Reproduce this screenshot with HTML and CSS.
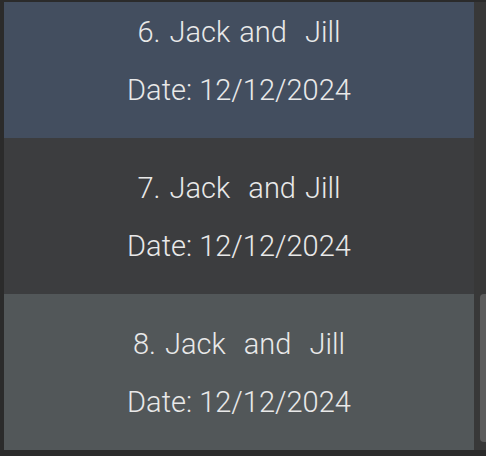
FILE: index.html
```html
<!DOCTYPE html>
<html>
<head>
<meta charset="utf-8">
<link rel="stylesheet" href="styles.css">
</head>
<body>
<div class="frame">
  <div class="viewport">
    <ul class="list">
      <li class="item item-blue"><span class="title">6. Jack and  Jill</span><span class="date">Date: 12/12/2024</span></li>
      <li class="item item-dark"><span class="title">7. Jack  and Jill</span><span class="date">Date: 12/12/2024</span></li>
      <li class="item item-slate"><span class="title">8. Jack  and  Jill</span><span class="date">Date: 12/12/2024</span></li>
    </ul>
  </div>
  <div class="track"><div class="thumb"></div></div>
</div>
</body>
</html>
```

FILE: styles.css
```css
html, body {
  margin: 0;
  padding: 0;
  background: #2b2b2b;
  width: 486px;
  height: 456px;
  overflow: hidden;
}
.frame {
  display: flex;
  padding: 2px 0 6px 4px;
  height: 448px;
}
.viewport {
  width: 470px;
  height: 448px;
  overflow: hidden;
}
.list {
  list-style: none;
  margin: -20px 0 0 0;
  padding: 0;
}
.item {
  height: 156px;
  box-sizing: border-box;
  padding-top: 2px;
  display: flex;
  flex-direction: column;
  justify-content: center;
  align-items: center;
  color: #e9e9e9;
  font-family: Roboto, "Liberation Sans", sans-serif;
  font-weight: 300;
  font-size: 29px;
  line-height: 58px;
  white-space: pre;
}
.title {
  word-spacing: 2px;
}
.item-blue { background: #434e5f; }
.item-dark { background: #3c3d3f; }
.item-slate { background: #525759; }
.track {
  width: 12px;
  height: 448px;
  background: #383838;
  display: flex;
  flex-direction: column;
  align-items: flex-end;
  padding-top: 292px;
  box-sizing: border-box;
}
.thumb {
  width: 6px;
  height: 148px;
  background: #5c5c5c;
  border-radius: 4px 0 0 4px;
}
```
